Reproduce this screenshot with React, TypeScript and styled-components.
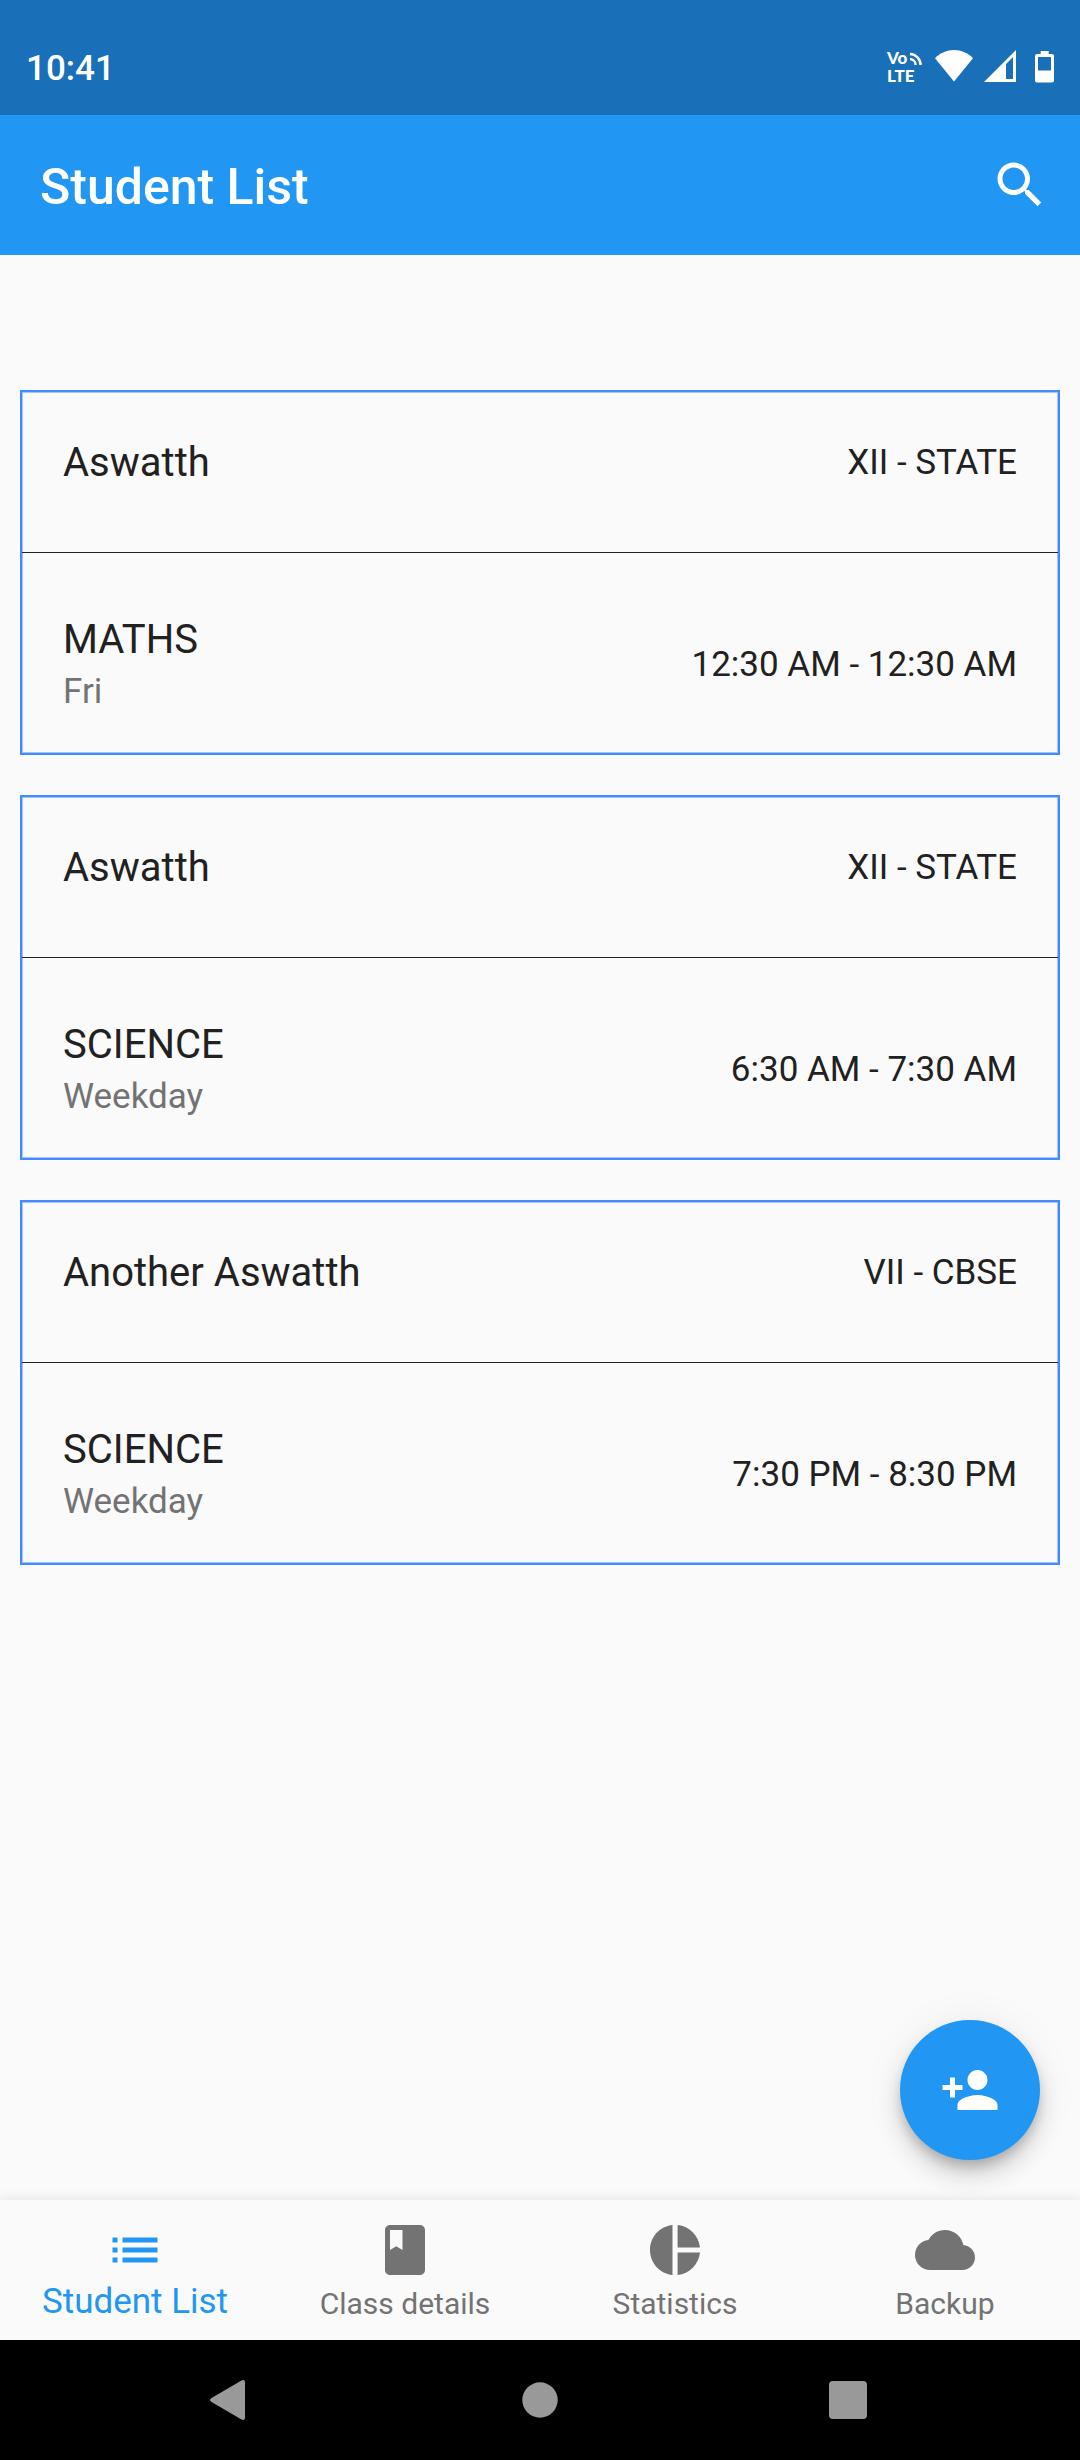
import React, { useState } from "react";
import styled, { createGlobalStyle } from "styled-components";

const GlobalStyle = createGlobalStyle`
  *, *::before, *::after { box-sizing: border-box; }
  body { margin: 0; background: #fafafa; }
  button { font: inherit; color: inherit; border: 0; padding: 0; background: none; cursor: pointer; }
  svg { display: block; }
`;

const Screen = styled.div`
  display: flex;
  flex-direction: column;
  min-height: 100vh;
  background: #fafafa;
  color: #212121;
  font-family: Roboto, "Liberation Sans", sans-serif;
`;

const StatusBar = styled.div`
  display: flex;
  align-items: flex-end;
  justify-content: space-between;
  height: 115px;
  padding: 0 12px 26px 26px;
  background: #1a70b8;
  color: #fff;
`;

const Clock = styled.time`
  font-size: 35px;
  line-height: 40px;
  font-weight: 500;
`;

const StatusIcons = styled.div`
  display: flex;
`;

const StatusGlyph = styled.svg.attrs({ viewBox: "0 0 46 46", "aria-hidden": true })`
  width: 46px;
  height: 46px;
  fill: #fff;
`;

const AppBar = styled.header`
  display: flex;
  align-items: flex-end;
  justify-content: space-between;
  padding: 40px 30px 40px 40px;
  background: #2196f3;
  color: #fff;
`;

const Title = styled.h1`
  margin: 0;
  font-size: 50px;
  line-height: 56px;
  font-weight: 500;
`;

const Content = styled.main`
  position: relative;
  flex: 1;
  padding: 135px 20px 180px;
`;

const CardList = styled.ul`
  display: flex;
  flex-direction: column;
  gap: 40px;
  margin: 0;
  padding: 0;
  list-style: none;
`;

const Card = styled.li`
  border: 2px solid #448aff;
  box-shadow: inset 0 0 0 1px #a2c4fd;
`;

const CardRow = styled.div`
  display: flex;
  align-items: center;
  justify-content: space-between;
  padding: 0 41px;
`;

const HeaderRow = styled(CardRow)`
  padding-top: 47px;
  padding-bottom: 65px;
  border-bottom: 1px solid #212121;
`;

const DetailRow = styled(CardRow)`
  padding-top: 63px;
  padding-bottom: 40px;
`;

const Primary = styled.div`
  font-size: 40px;
  line-height: 48px;
`;

const Secondary = styled.div`
  margin-top: 7px;
  font-size: 35px;
  line-height: 42px;
  color: #737373;
`;

const Trailing = styled.div`
  font-size: 35px;
  line-height: 42px;
`;

const Fab = styled.button`
  position: absolute;
  right: 40px;
  bottom: 40px;
  display: grid;
  place-items: center;
  width: 140px;
  height: 140px;
  border-radius: 50%;
  background: #2196f3;
  color: #fff;
  box-shadow:
    0 8px 12px -2px rgba(0, 0, 0, 0.2),
    0 15px 25px rgba(0, 0, 0, 0.14),
    0 3px 45px rgba(0, 0, 0, 0.06);
`;

const Tabs = styled.nav`
  position: relative;
  display: grid;
  grid-template-columns: repeat(4, 1fr);
  background: #fafafa;
  box-shadow: 0 0 12px rgba(0, 0, 0, 0.1);
`;

const Tab = styled.button<{ $active: boolean }>`
  display: flex;
  flex-direction: column;
  align-items: center;
  height: 140px;
  padding-top: 20px;
  color: ${(p) => (p.$active ? "#2196f3" : "#737373")};
  font-size: ${(p) => (p.$active ? 35 : 30)}px;
  line-height: ${(p) => (p.$active ? 44 : 48)}px;
`;

const MaterialIcon = styled.svg.attrs({ viewBox: "0 0 24 24", "aria-hidden": true })`
  width: 60px;
  height: 60px;
  fill: currentColor;
`;

const SystemBar = styled.div`
  display: grid;
  grid-template-columns: repeat(3, 1fr);
  height: 120px;
  padding: 0 78px;
  background: #000;
  color: #999;
`;

const SystemButton = styled.button`
  display: grid;
  place-items: center;
`;

const SystemGlyph = styled.svg.attrs({ viewBox: "0 0 60 60", "aria-hidden": true })`
  width: 60px;
  height: 60px;
  fill: currentColor;
`;

const GlyphText = styled.text`
  font-family: Lato, Roboto, sans-serif;
  font-size: 17px;
  font-weight: 900;
`;

const lessons = [
  { name: "Aswatth", grade: "XII - STATE", subject: "MATHS", days: "Fri", time: "12:30 AM - 12:30 AM" },
  { name: "Aswatth", grade: "XII - STATE", subject: "SCIENCE", days: "Weekday", time: "6:30 AM - 7:30 AM" },
  { name: "Another Aswatth", grade: "VII - CBSE", subject: "SCIENCE", days: "Weekday", time: "7:30 PM - 8:30 PM" },
];

const tabs = [
  {
    label: "Student List",
    path: "M3 13h2v-2H3v2zm0 4h2v-2H3v2zm0-8h2V7H3v2zm4 4h14v-2H7v2zm0 4h14v-2H7v2zM7 7v2h14V7H7z",
  },
  {
    label: "Class details",
    path: "M18 2H6c-1.1 0-2 .9-2 2v16c0 1.1.9 2 2 2h12c1.1 0 2-.9 2-2V4c0-1.1-.9-2-2-2zM6 4h5v8l-2.5-1.5L6 12V4z",
  },
  {
    label: "Statistics",
    path: "M11 2v20c-5.07-.5-9-4.79-9-10s3.93-9.5 9-10zm2.03 0v8.99H22c-.47-4.74-4.24-8.52-8.97-8.99zm0 11.01V22c4.74-.47 8.5-4.25 8.97-8.99h-8.97z",
  },
  {
    label: "Backup",
    path: "M19.35 10.04C18.67 6.59 15.64 4 12 4 9.11 4 6.6 5.64 5.35 8.04 2.34 8.36 0 10.91 0 14c0 3.31 2.69 6 6 6h13c2.76 0 5-2.24 5-5 0-2.64-2.05-4.78-4.65-4.96z",
  },
];

export default function App() {
  const [active, setActive] = useState(0);

  return (
    <Screen>
      <GlobalStyle />
      <StatusBar>
        <Clock>10:41</Clock>
        <StatusIcons>
          <StatusGlyph>
            <GlyphText x="3" y="21">Vo</GlyphText>
            <GlyphText x="3" y="39">LTE</GlyphText>
            <g fill="none" stroke="#fff" strokeWidth="2.4">
              <path d="M26 11A11 11 0 0 1 36.6 22" />
              <path d="M26 16A6 6 0 0 1 31.600 22" />
            </g>
          </StatusGlyph>
          <StatusGlyph>
            <path d="M24 38.500L5 15.200C10.200 10 16.800 7 24 7s13.800 3 19 8.200z" />
          </StatusGlyph>
          <StatusGlyph>
            <path fillRule="evenodd" d="M8 39L40 7v32zM30 21v15h7V14z" />
          </StatusGlyph>
          <StatusGlyph>
            <path
              fillRule="evenodd"
              d="M18.700 8h8v3H30a2 2 0 0 1 2 2v24.500a2 2 0 0 1-2 2H15a2 2 0 0 1-2-2V13a2 2 0 0 1 2-2h3.700zM16 14v13.500h13V14z"
            />
          </StatusGlyph>
        </StatusIcons>
      </StatusBar>

      <AppBar>
        <Title>Student List</Title>
        <button type="button" aria-label="Search">
          <MaterialIcon>
            <path d="M15.500 14h-.790l-.280-.270C15.410 12.590 16 11.110 16 9.500 16 5.910 13.090 3 9.500 3S3 5.910 3 9.500 5.910 16 9.500 16c1.610 0 3.090-.590 4.230-1.570l.270.280v.790l5 4.990L20.490 19l-4.990-5zm-6 0C7.010 14 5 11.990 5 9.500S7.010 5 9.500 5 14 7.010 14 9.500 11.990 14 9.500 14z" />
          </MaterialIcon>
        </button>
      </AppBar>

      <Content>
        <CardList>
          {lessons.map((lesson, i) => (
            <Card key={i}>
              <HeaderRow>
                <Primary>{lesson.name}</Primary>
                <Trailing>{lesson.grade}</Trailing>
              </HeaderRow>
              <DetailRow>
                <div>
                  <Primary>{lesson.subject}</Primary>
                  <Secondary>{lesson.days}</Secondary>
                </div>
                <Trailing>{lesson.time}</Trailing>
              </DetailRow>
            </Card>
          ))}
        </CardList>
        <Fab type="button" aria-label="Add student">
          <MaterialIcon>
            <path d="M15 12c2.210 0 4-1.790 4-4s-1.790-4-4-4-4 1.790-4 4 1.790 4 4 4zm-9-2V7H4v3H1v2h3v3h2v-3h3v-2H6zm9 4c-2.670 0-8 1.340-8 4v2h16v-2c0-2.660-5.330-4-8-4z" />
          </MaterialIcon>
        </Fab>
      </Content>

      <Tabs>
        {tabs.map((tab, i) => (
          <Tab
            key={tab.label}
            type="button"
            $active={i === active}
            aria-current={i === active ? "page" : undefined}
            onClick={() => setActive(i)}
          >
            <MaterialIcon>
              <path d={tab.path} />
            </MaterialIcon>
            {tab.label}
          </Tab>
        ))}
      </Tabs>

      <SystemBar>
        <SystemButton type="button" aria-label="Back">
          <SystemGlyph>
            <path d="M9.500 28L39.500 10.500Q43 9 43 12.500V47.500Q43 51 39.500 49.500L9.500 32Q6.500 30 9.500 28z" />
          </SystemGlyph>
        </SystemButton>
        <SystemButton type="button" aria-label="Home">
          <SystemGlyph>
            <circle cx="30" cy="30" r="17.7" />
          </SystemGlyph>
        </SystemButton>
        <SystemButton type="button" aria-label="Recent apps">
          <SystemGlyph>
            <rect x="11" y="11" width="38" height="38" rx="4" />
          </SystemGlyph>
        </SystemButton>
      </SystemBar>
    </Screen>
  );
}
